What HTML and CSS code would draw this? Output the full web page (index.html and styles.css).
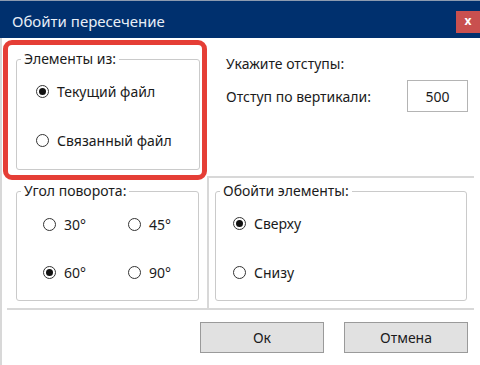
FILE: index.html
```html
<!DOCTYPE html>
<html>
<head>
    <title>Обойти пересечение</title>
    <link rel="stylesheet" href="styles.css">
</head>
<body>
    <div class="window">
        <div class="titlebar">
            <span class="title">Обойти пересечение</span>
            <span class="close">x</span>
        </div>
        <div class="frame">
            <div class="content">
                <div class="cell source">
                    <fieldset class="group group-source">
                        <legend>Элементы из:</legend>
                        <div class="radio-list">
                            <label class="radio checked"><span class="dot"></span>Текущий файл</label>
                            <label class="radio"><span class="dot"></span>Связанный файл</label>
                        </div>
                    </fieldset>
                </div>
                <div class="cell offsets">
                    <div class="offsets-title">Укажите отступы:</div>
                    <div class="offset-row">
                        <span>Отступ по вертикали:</span>
                        <input class="num" type="text" value="500">
                    </div>
                </div>
                <div class="cell angle">
                    <fieldset class="group group-angle">
                        <legend>Угол поворота:</legend>
                        <div class="radio-grid">
                            <label class="radio"><span class="dot"></span>30°</label>
                            <label class="radio"><span class="dot"></span>45°</label>
                            <label class="radio checked"><span class="dot"></span>60°</label>
                            <label class="radio"><span class="dot"></span>90°</label>
                        </div>
                    </fieldset>
                </div>
                <div class="cell bypass">
                    <fieldset class="group group-bypass">
                        <legend>Обойти элементы:</legend>
                        <div class="radio-list list-bypass">
                            <label class="radio checked"><span class="dot"></span>Сверху</label>
                            <label class="radio"><span class="dot"></span>Снизу</label>
                        </div>
                    </fieldset>
                </div>
            </div>
            <div class="footer">
                <button class="btn">Ок</button>
                <button class="btn">Отмена</button>
            </div>
        </div>
    </div>
</body>
</html>
```

FILE: styles.css
```css
* {
    box-sizing: border-box;
}

body {
    margin: 0;
    font-family: "Noto Sans", "Open Sans", sans-serif;
    font-size: 14px;
    color: #1b1b1b;
    background-color: #fff;
}

.window {
    width: 480px;
    height: 365px;
    overflow: hidden;
}

.titlebar {
    height: 38px;
    background-color: #00306e;
    border-top: 1px solid #8c9bb0;
    display: flex;
    align-items: flex-start;
    padding-left: 12px;
}

.title {
    color: #e8eef6;
    font-size: 15px;
    line-height: 20px;
    margin-top: 10px;
}

.close {
    margin-left: auto;
    margin-top: 10px;
    width: 24px;
    height: 22px;
    background-color: #c9504f;
    color: #fff;
    font-weight: bold;
    font-size: 12px;
    line-height: 20px;
    text-align: center;
}

.frame {
    height: 327px;
    border-left: 2px solid #d8d8d8;
    padding-left: 5px;
}

.content {
    display: grid;
    grid-template-columns: 200px 267px;
    grid-template-rows: 138px 132px;
    width: 467px;
    border-bottom: 2px solid #d8d8d8;
}

.source {
    align-self: start;
    width: 204px;
    height: 140px;
    margin: 2px 0 0 -4px;
    border: 5px solid #e53e36;
    border-radius: 9px;
    position: relative;
    z-index: 1;
}

.group {
    margin: 0;
    padding: 0;
    border: 1px solid #cacaca;
    border-radius: 3px;
    min-width: 0;
}

.group legend {
    margin-left: 4px;
    padding: 0 3px;
    line-height: 18px;
}

.group-source {
    margin: 5px 0 0 8px;
    width: 184px;
    height: 120px;
}

.radio-list {
    display: flex;
    flex-direction: column;
    gap: 27px;
    padding: 12px 0 0 19px;
}

.radio {
    display: flex;
    align-items: center;
    gap: 8px;
    height: 22px;
}

.dot {
    width: 13px;
    height: 13px;
    border: 1px solid #333;
    border-radius: 50%;
    display: flex;
    align-items: center;
    justify-content: center;
    flex-shrink: 0;
}

.checked .dot::after {
    content: "";
    width: 7px;
    height: 7px;
    border-radius: 50%;
    background-color: #111;
}

.offsets {
    padding: 16px 6px 0 19px;
}

.offsets-title {
    line-height: 20px;
}

.offset-row {
    display: flex;
    justify-content: space-between;
    align-items: center;
    margin-top: 6px;
}

.num {
    width: 61px;
    height: 32px;
    border: 1px solid #b4b4b4;
    font-family: inherit;
    font-size: 14px;
    color: #1b1b1b;
    text-align: center;
    padding: 0;
}

.angle {
    padding: 6px 0 0 9px;
}

.group-angle {
    width: 183px;
    height: 119px;
}

.radio-grid {
    display: grid;
    grid-template-columns: 85px 85px;
    row-gap: 26px;
    padding: 13px 0 0 26px;
}

.bypass {
    border-left: 2px solid #d8d8d8;
    border-top: 2px solid #d8d8d8;
    padding: 4px 0 0 6px;
}

.group-bypass {
    width: 252px;
    height: 119px;
}

.list-bypass {
    padding: 12px 0 0 17px;
}

.footer {
    display: flex;
    justify-content: flex-end;
    gap: 20px;
    padding: 12px 12px 0 0;
    width: 473px;
}

.btn {
    width: 124px;
    height: 31px;
    background-color: #e1e1e1;
    border: 1px solid #9a9a9a;
    font-family: inherit;
    font-size: 14px;
    color: #1b1b1b;
    padding: 0;
}
```
